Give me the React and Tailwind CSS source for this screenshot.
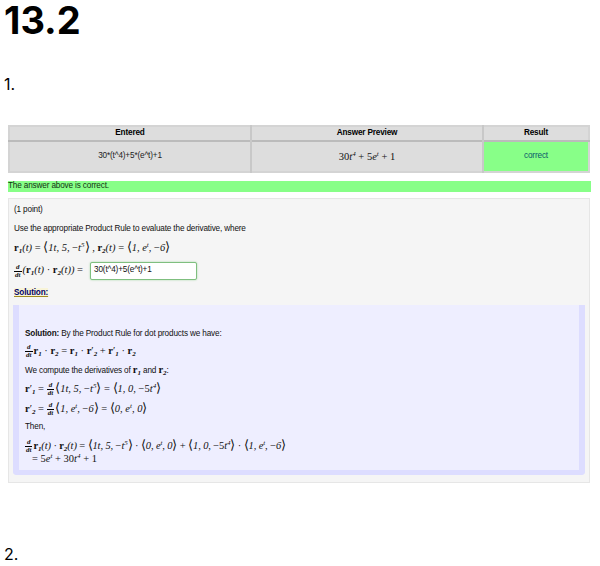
import React from 'react';

const sans = "font-['Liberation_Sans',Arial,sans-serif]";
const math = "font-['Liberation_Serif','Times_New_Roman',serif] whitespace-nowrap text-[10.5px] tracking-normal text-[#111111]";

const Bold = ({ children }) => <b className="font-bold">{children}</b>;
const It = ({ children }) => <i className="italic">{children}</i>;
const Sub = ({ children }) => <span className="text-[7px] font-bold italic align-[-2px] leading-none">{children}</span>;
const Sup = ({ children }) => <span className="text-[7px] italic align-[4px] leading-none">{children}</span>;

const Ddt = () => (
    <span className="inline-flex flex-col items-center align-middle text-[7px] leading-[7px] mr-px italic">
        <span className="border-b border-black px-[2px] font-bold">d</span>
        <span className="font-bold">dt</span>
    </span>
);

const R1 = () => <><Bold>r</Bold><Sub>1</Sub></>;
const R2 = () => <><Bold>r</Bold><Sub>2</Sub></>;

const Big = ({ children }) => <span className="text-[13px] leading-none">{children}</span>;

const App = () => {
    return (
        <div className="w-[600px] h-[566px] overflow-hidden bg-white font-['Inter',sans-serif] text-black">
            <h1 className="pl-1 text-[38px] leading-[40px] font-bold">13.2</h1>
            <div className="mt-[34px] pl-1 text-base leading-5">1.</div>

            <div className={`mt-[31px] mx-2 ${sans} text-[8.2px] tracking-[-0.15px]`}>
                <table className="w-[582px] table-fixed border-collapse border-2 border-[#d4d4d4] bg-[#dddddd]">
                    <thead>
                        <tr className="h-[15px] border-b-2 border-[#bbbbbb]">
                            <th className="w-[242px] font-bold border-r-2 border-[#c8c8c8]">Entered</th>
                            <th className="w-[232px] font-bold border-r-2 border-[#c8c8c8]">Answer Preview</th>
                            <th className="font-bold">Result</th>
                        </tr>
                    </thead>
                    <tbody>
                        <tr className="h-[31px]">
                            <td className="text-center border-r-2 border-[#c8c8c8] text-[#222222]">30*(t^4)+5*(e^t)+1</td>
                            <td className={`text-center border-r-2 border-[#c8c8c8] ${math}`}>
                                30<It>t</It><Sup>4</Sup> + 5<It>e</It><Sup>t</Sup> + 1
                            </td>
                            <td className="text-center bg-[#88ff88] text-[#0a5a6a]">correct</td>
                        </tr>
                    </tbody>
                </table>

                <div className="mt-[8px] w-[583px] h-[11px] leading-[10px] bg-[#88ff88] text-[#123312]">
                    The answer above is correct.
                </div>

                <div className="mt-[6px] h-[285px] w-[582px] border border-[#e6e6e6] bg-[#f5f5f5] pl-[5px] text-[#111111]">
                    <p className="mt-[5px] leading-[11px]">(1 point)</p>
                    <p className="mt-[8px] leading-[11px]">Use the appropriate Product Rule to evaluate the derivative, where</p>
                    <div className={`mt-[5px] h-[18px] flex items-center ${math}`}>
                        <span><R1 /><It>(t)</It> = <Big>⟨</Big><It>1t, 5,</It> −<It>t</It><Sup>5</Sup><Big>⟩</Big> , <R2 /><It>(t)</It> = <Big>⟨</Big><It>1, e</It><Sup>t</Sup><It>,</It> −<It>6</It><Big>⟩</Big></span>
                    </div>
                    <div className="mt-[4px] flex items-center h-[19px]">
                        <span className={`${math} w-[76px] shrink-0`}>
                            <Ddt /><It>(</It><R1 /><It>(t)</It> · <R2 /><It>(t))</It> =
                        </span>
                        <div className="w-[107px] h-[18px] bg-white border border-[#7fbf7f] rounded-[2px] pl-[3px] flex items-center shadow-[0_0_2px_#9fd49f]">
                            30(t^4)+5(e^t)+1
                        </div>
                    </div>
                    <p className="mt-[7px] leading-[11px]">
                        <span className="font-bold text-[#000066] underline decoration-[#a08a20] bg-[#f8f4d8]">Solution:</span>
                    </p>

                    <div className="mt-[7px] -ml-px w-[572px] h-[170px] bg-[#eeeeff] border-x-[6px] border-b-[5px] border-[#ddddff] rounded-b-[4px] pl-[6px] pt-[23px]">
                        <p className="leading-[11px]"><b>Solution:</b> By the Product Rule for dot products we have:</p>
                        <div className={`mt-[3px] h-[18px] flex items-center ${math}`}>
                            <span><Ddt /><R1 /> · <R2 /> = <R1 /> · <Bold>r</Bold>′<Sub>2</Sub> + <Bold>r</Bold>′<Sub>1</Sub> · <R2 /></span>
                        </div>
                        <p className="mt-[4px] leading-[11px]">We compute the derivatives of <span className={math}><R1 /></span> and <span className={math}><R2 /></span>:</p>
                        <div className={`mt-[3px] h-[18px] flex items-center ${math}`}>
                            <span><Bold>r</Bold>′<Sub>1</Sub> = <Ddt /><Big>⟨</Big><It>1t, 5,</It> −<It>t</It><Sup>5</Sup><Big>⟩</Big> = <Big>⟨</Big><It>1, 0,</It> −5<It>t</It><Sup>4</Sup><Big>⟩</Big></span>
                        </div>
                        <div className={`mt-[2px] h-[18px] flex items-center ${math}`}>
                            <span><Bold>r</Bold>′<Sub>2</Sub> = <Ddt /><Big>⟨</Big><It>1, e</It><Sup>t</Sup><It>,</It> −<It>6</It><Big>⟩</Big> = <Big>⟨</Big><It>0, e</It><Sup>t</Sup><It>, 0</It><Big>⟩</Big></span>
                        </div>
                        <p className="mt-[3px] leading-[11px]">Then,</p>
                        <div className={`mt-[5px] h-[18px] flex items-center ${math}`}>
                            <span className="tracking-[-0.12px]"><Ddt /><R1 /><It>(t)</It> · <R2 /><It>(t)</It> = <Big>⟨</Big><It>1t, 5,</It> −<It>t</It><Sup>5</Sup><Big>⟩</Big> · <Big>⟨</Big><It>0, e</It><Sup>t</Sup><It>, 0</It><Big>⟩</Big> + <Big>⟨</Big><It>1, 0,</It> −5<It>t</It><Sup>4</Sup><Big>⟩</Big> · <Big>⟨</Big><It>1, e</It><Sup>t</Sup><It>,</It> −<It>6</It><Big>⟩</Big></span>
                        </div>
                        <div className={`-mt-[2px] h-[12px] flex items-center pl-[7px] ${math}`}>
                            <span>= 5<It>e</It><Sup>t</Sup> + 30<It>t</It><Sup>4</Sup> + 1</span>
                        </div>
                    </div>
                </div>
            </div>

            <div className="mt-[61px] pl-1 text-base leading-5">2.</div>
        </div>
    );
};

export default App;
